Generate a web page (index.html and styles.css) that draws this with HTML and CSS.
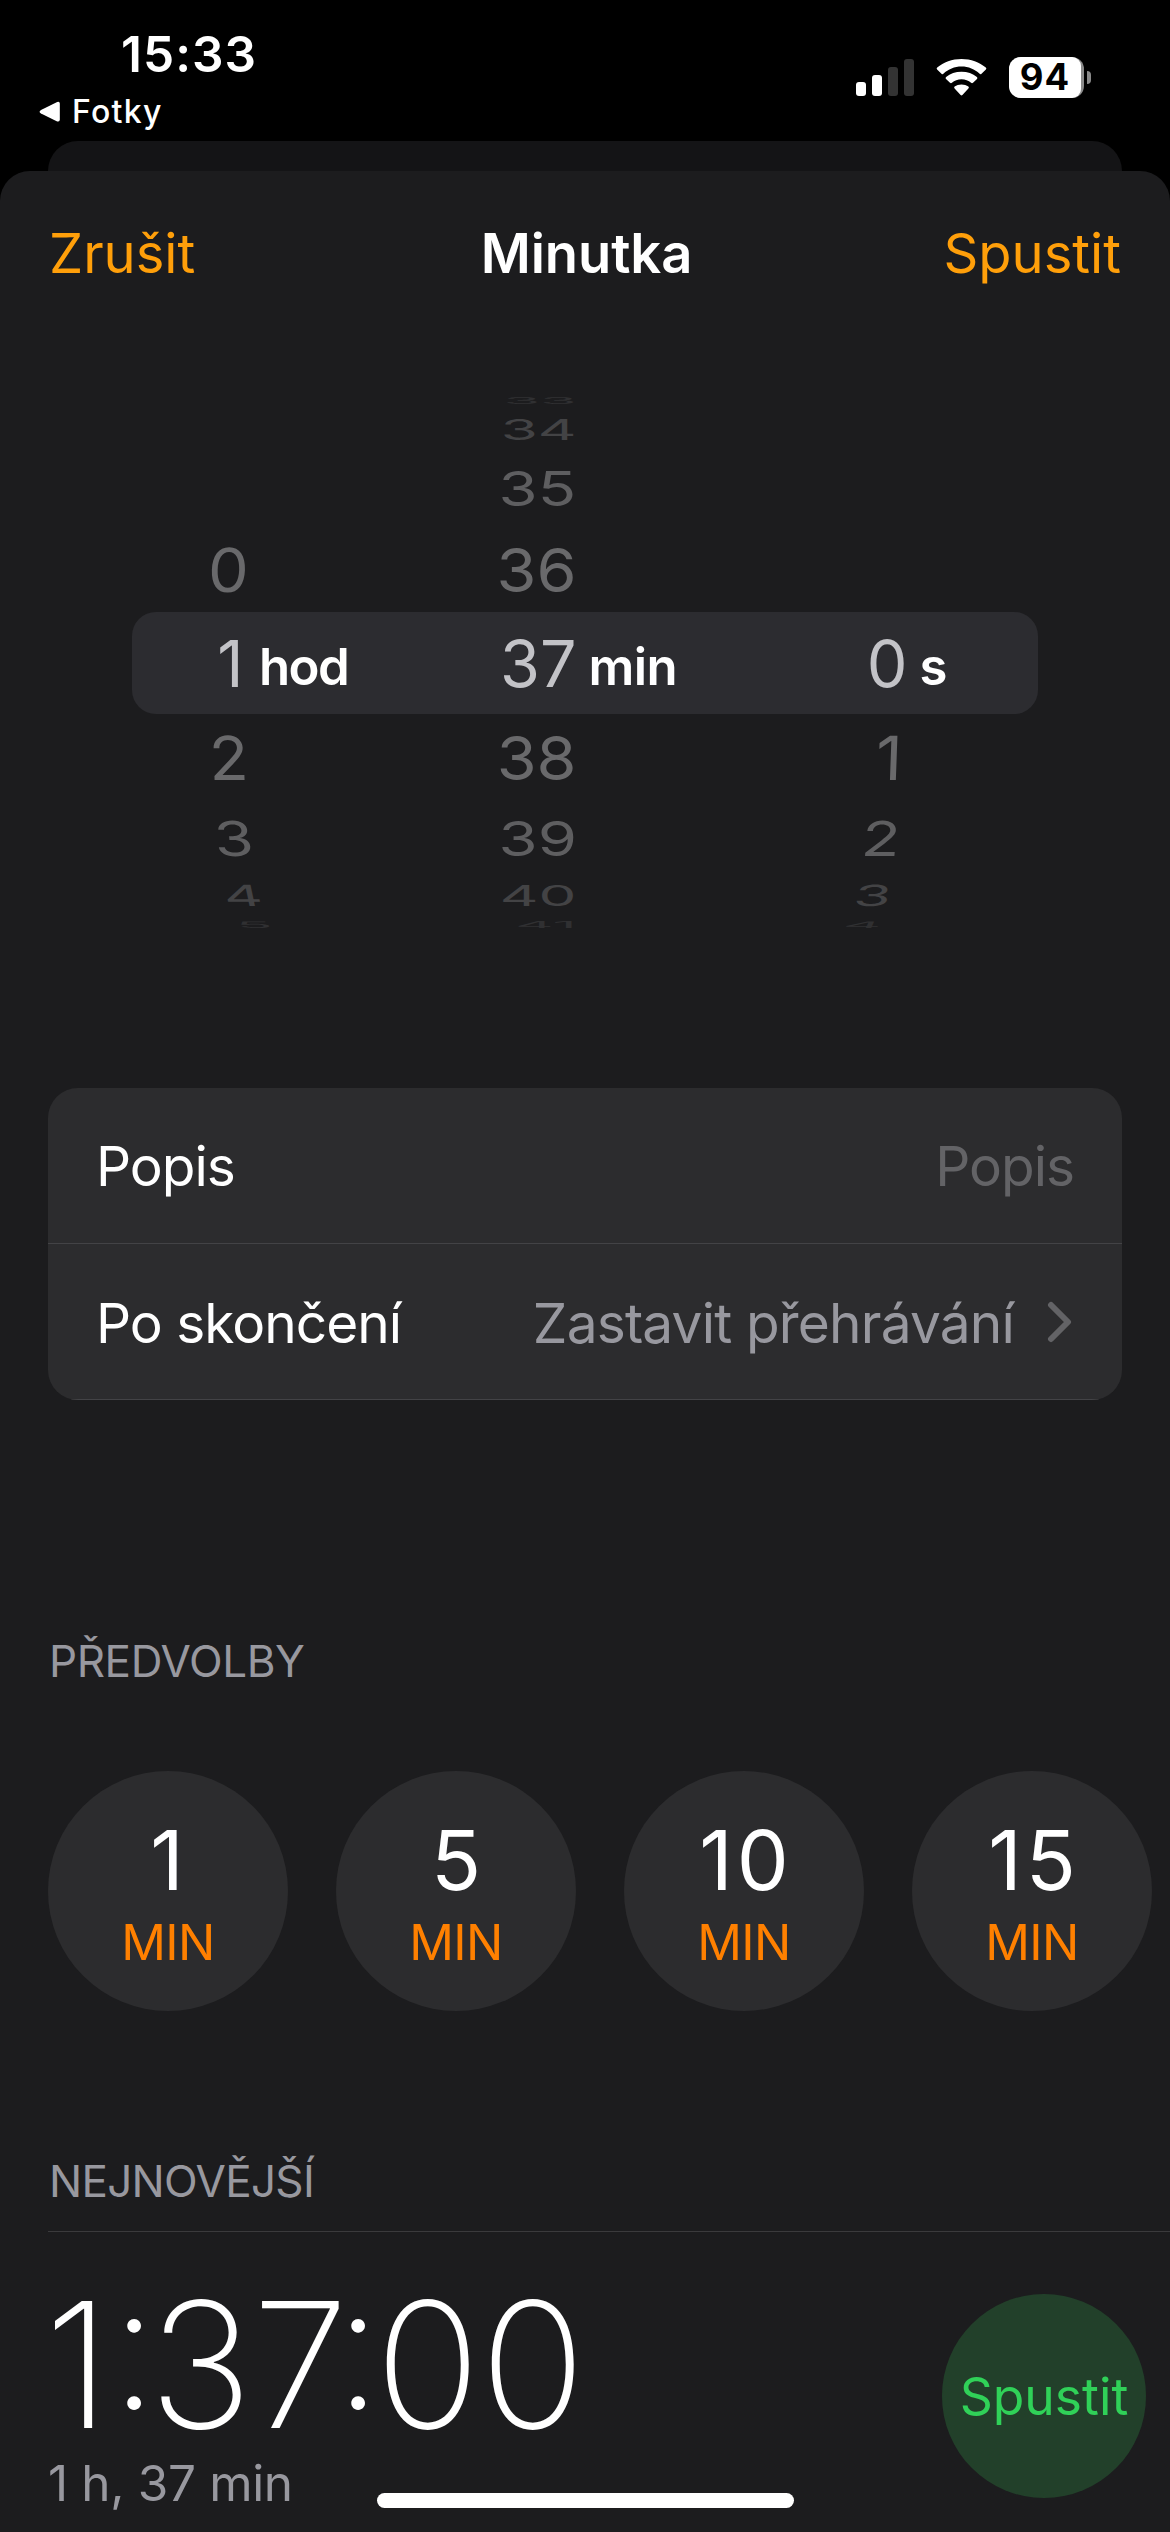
FILE: index.html
```html
<!DOCTYPE html>
<html lang="cs">
<head>
<meta charset="utf-8">
<title>Minutka</title>
<link rel="stylesheet" href="styles.css">
</head>
<body>
<div class="screen">
  <header class="status">
    <div class="status-left">
      <div class="clock">15:33</div>
      <div class="back">
        <svg class="back-arrow" width="22" height="22" viewBox="0 0 22 22"><path d="M2 8.9 L18.2 1 Q20.8 0 20.8 2.6 V18.6 Q20.8 21.2 18.2 20.4 L2 12.6 Q-.8 10.8 2 8.9Z" fill="#fff"/></svg>
        <span>Fotky</span>
      </div>
    </div>
    <div class="status-right">
      <svg class="signal" width="58" height="37" viewBox="0 0 58 37">
        <rect x="0" y="23" width="10" height="14" rx="3" fill="#fff"/>
        <rect x="16" y="16" width="10" height="21" rx="3" fill="#fff"/>
        <rect x="32" y="8" width="10" height="29" rx="3" fill="#333"/>
        <rect x="48" y="0" width="10" height="37" rx="3" fill="#333"/>
      </svg>
      <svg class="wifi" width="51" height="37" viewBox="0 0 51 37" fill="#fff">
        <path d="M25.5 7.6C32.5 7.6 38.8 10.3 43.6 14.8Q44.6 15.7 45.5 14.7L49.9 10.6Q50.9 9.6 49.8 8.6C43.4 3.2 34.9 0 25.5 0S7.6 3.2 1.2 8.6Q.1 9.6 1.1 10.6L5.5 14.7Q6.4 15.7 7.4 14.8C12.2 10.3 18.5 7.6 25.5 7.6Z"/>
        <path d="M25.5 20.2C29.3 20.2 32.5 21.6 35.1 23.8Q36.1 24.6 37 23.7L41 19.9Q42 18.9 40.9 18C36.8 14.6 31.4 12.7 25.5 12.7S14.2 14.6 10.1 18Q9 18.9 10 19.9L14 23.7Q14.9 24.6 15.9 23.8C18.5 21.6 21.7 20.2 25.5 20.2Z"/>
        <path d="M25.5 25.4C28.2 25.4 30.5 26.2 32.4 27.6Q33.4 28.5 32.4 29.5L26.4 36.1Q25.5 37 24.6 36.1L18.6 29.5Q17.6 28.5 18.6 27.6C20.5 26.2 22.8 25.4 25.5 25.4Z"/>
      </svg>
      <div class="battery"><div class="battery-level">94</div></div>
      <div class="battery-cap"></div>
    </div>
  </header>
  <div class="sheet-behind"></div>
  <main class="sheet">
    <nav class="navbar">
      <a class="nav-action">Zrušit</a>
      <h1 class="nav-title">Minutka</h1>
      <a class="nav-action nav-right">Spustit</a>
    </nav>

    <section class="picker">
      <div class="picker-band"></div>
      <div class="wheel wheel-hours">
        <span class="row r4"></span><span class="row r3"></span><span class="row r2"></span>
        <span class="row r1 up">0</span>
        <span class="row r0">1</span>
        <span class="row r1 down">2</span><span class="row r2 down">3</span><span class="row r3 down">4</span><span class="row r4 down">5</span>
      </div>
      <div class="unit unit-hours">hod</div>
      <div class="wheel wheel-minutes">
        <span class="row r4">33</span><span class="row r3">34</span><span class="row r2">35</span><span class="row r1">36</span>
        <span class="row r0">37</span>
        <span class="row r1">38</span><span class="row r2">39</span><span class="row r3">40</span><span class="row r4">41</span>
      </div>
      <div class="unit">min</div>
      <div class="wheel wheel-seconds">
        <span class="row r4"></span><span class="row r3"></span><span class="row r2"></span><span class="row r1"></span>
        <span class="row r0">0</span>
        <span class="row r1 down">1</span><span class="row r2 down">2</span><span class="row r3 down">3</span><span class="row r4 down">4</span>
      </div>
      <div class="unit">s</div>
    </section>

    <section class="card">
      <div class="field">
        <span class="field-label">Popis</span>
        <span class="field-placeholder">Popis</span>
      </div>
      <div class="field field-end">
        <span class="field-label">Po skončení</span>
        <span class="field-value">Zastavit přehrávání</span>
        <svg class="chevron" width="26" height="42" viewBox="0 0 26 42"><path d="M4 4 L21 21 L4 38" fill="none" stroke="#636366" stroke-width="6" stroke-linecap="round" stroke-linejoin="round"/></svg>
      </div>
    </section>

    <h2 class="section-title presets-title">PŘEDVOLBY</h2>
    <div class="presets">
      <div class="preset"><b class="one">1</b><span>MIN</span></div>
      <div class="preset"><b>5</b><span>MIN</span></div>
      <div class="preset"><b class="two">10</b><span>MIN</span></div>
      <div class="preset"><b class="two">15</b><span>MIN</span></div>
    </div>

    <h2 class="section-title recents-title">NEJNOVĚJŠÍ</h2>
    <div class="recent">
      <div class="recent-info">
        <div class="recent-time">1<i class="colon first">:</i>37<i class="colon">:</i>00</div>
        <div class="recent-name">1 h, 37 min</div>
      </div>
      <div class="start">Spustit</div>
    </div>
  </main>
  <div class="home-indicator"></div>
</div>
</body>
</html>
```
FILE: styles.css
```css
* { box-sizing: border-box; }
body {
  margin: 0;
  background: #000;
  color: #fff;
  font-family: Inter, "Liberation Sans", sans-serif;
}
.screen {
  position: relative;
  display: flex;
  flex-direction: column;
  width: 1170px;
  height: 2532px;
  overflow: hidden;
  background: #000;
}

/* Status bar */
.status {
  display: flex;
  justify-content: space-between;
  flex: none;
  height: 141px;
}
.status-left { padding-top: 24px; }
.clock {
  margin-left: 121px;
  font-size: 49.5px;
  font-weight: 600;
  line-height: 60px;
  letter-spacing: 1.05px;
}
.back {
  display: flex;
  align-items: center;
  gap: 11px;
  margin: 7px 0 0 39px;
  font-size: 32px;
  font-weight: 500;
  line-height: 41px;
  letter-spacing: 1.25px;
}
.status-right {
  display: flex;
  align-items: center;
  height: 41px;
  margin: 57px 79px 0 0;
}
.wifi { margin: 0 22px; }
.battery {
  width: 75px;
  height: 41px;
  border-radius: 12px;
  background: #8a8a8a;
}
.battery-level {
  width: 72px;
  height: 41px;
  border-radius: 12px 9px 9px 12px;
  background: #fff;
  color: #000;
  font-size: 36.5px;
  font-weight: 700;
  line-height: 41px;
  letter-spacing: 1px;
  text-align: center;
}
.battery-cap {
  width: 4px;
  height: 13px;
  margin-left: 3px;
  border-radius: 0 6px 6px 0;
  background: #8a8a8a;
}

/* Sheets */
.sheet-behind {
  flex: none;
  height: 30px;
  margin: 0 48px;
  border-radius: 30px 30px 0 0;
  background: #141416;
}
.sheet {
  flex: 1;
  border-radius: 30px 30px 0 0;
  background: #1c1c1e;
}
.navbar {
  display: grid;
  grid-template-columns: 1fr auto 1fr;
  align-items: center;
  height: 164px;
  padding: 0 49px;
  font-size: 54.3px;
}
.nav-action { color: #ff9f0a; }
.nav-right { text-align: right; }
.nav-title {
  margin: 0 0 0 3px;
  font-size: 54.3px;
  font-weight: 600;
  letter-spacing: -.1px;
}

/* Time picker */
.picker {
  position: relative;
  display: grid;
  grid-template-columns: 111.5px 144.5px 188.5px 144px 187px 130.5px;
  align-items: center;
  height: 542px;
  margin: 57px 132px 0;
}
.picker-band {
  position: absolute;
  inset: 220px 0;
  border-radius: 24px;
  background: #2c2c30;
}
.wheel {
  position: relative;
  display: flex;
  flex-direction: column;
  align-items: flex-end;
  font-size: 64.6px;
}
.row {
  --shift: 0px;
  --lean: 0deg;
  --narrow: 1;
  --squash: 1;
  flex: none;
  transform: translateX(var(--shift)) skewX(var(--lean)) scale(var(--narrow), var(--squash));
  transform-origin: right center;
}
.r0 { height: 102px; line-height: 103px; color: #c3c3c7; }
.r1 { height: 86px; line-height: 87px; --squash: .94; color: #69696b; }
.r2 { height: 76px; line-height: 77px; --narrow: .98; --squash: .745; color: #5e5e60; }
.r3 { height: 40px; line-height: 40px; --narrow: .93; --squash: .45; color: #434345; }
.r4 { height: 18px; line-height: 18px; --narrow: .92; --squash: .14; color: #303032; }
.wheel-hours .r1 { --shift: 5px; --lean: 2deg; }
.wheel-hours .r1.up { --lean: -2deg; }
.wheel-hours .r2 { --shift: 9.5px; --lean: 5deg; }
.wheel-hours .r3 { --shift: 18.5px; --lean: 12deg; }
.wheel-hours .r4 { --shift: 29px; --lean: 24deg; }
.wheel-seconds .r1 { --shift: -5px; --lean: -2deg; }
.wheel-seconds .r2 { --shift: -7px; --lean: -5deg; }
.wheel-seconds .r3 { --shift: -16.5px; --lean: -12deg; }
.wheel-seconds .r4 { --shift: -26px; --lean: -24deg; }
.unit {
  position: relative;
  padding: 7px 0 0 12px;
  font-size: 50.9px;
  font-weight: 600;
  letter-spacing: -.6px;
}
.unit-hours { padding-left: 15.5px; letter-spacing: -1.6px; }

/* Settings card */
.card {
  margin: 154px 48px 0;
  border-radius: 30px;
  background: #2c2c2e;
  overflow: hidden;
  font-size: 55px;
  letter-spacing: -1px;
}
.field {
  display: flex;
  align-items: center;
  height: 156px;
  padding: 0 48px;
  border-bottom: 1px solid #434346;
}
.field-end { padding: 3px 49px 0 48px; }
.field-placeholder { margin-left: auto; color: #636366; }
.field-value {
  margin-left: auto;
  color: #98989f;
  letter-spacing: -.82px;
}
.chevron { margin: -3px 0 0 33px; }

/* Presets */
.section-title {
  margin: 0 49px;
  color: #98989f;
  font-size: 44px;
  font-weight: 400;
  line-height: 52px;
}
.presets-title { margin-top: 235px; letter-spacing: -.4px; }
.presets {
  display: flex;
  gap: 48px;
  margin: 84px 0 0 48px;
}
.preset {
  display: flex;
  flex: none;
  flex-direction: column;
  align-items: center;
  gap: 16px;
  width: 240px;
  height: 240px;
  padding-top: 48px;
  border-radius: 50%;
  background: #2c2c2e;
}
.preset b {
  font-size: 82.5px;
  font-weight: 400;
  line-height: 82px;
}
.preset .one { margin-right: 2px; }
.preset .two { margin-right: -4px; letter-spacing: 4px; }
.preset span {
  color: #ff8000;
  font-size: 49.5px;
  line-height: 50px;
  letter-spacing: -.6px;
}

/* Recent timers */
.recents-title { margin-top: 144px; letter-spacing: -.7px; }
.recent {
  display: flex;
  justify-content: space-between;
  margin: 24px 0 0 48px;
  padding: 62px 24px 0 0;
  border-top: 1px solid #3a3a3c;
}
.recent-time {
  margin: 1px 0 0 -4px;
  font-size: 174.7px;
  font-weight: 200;
  line-height: 140px;
  letter-spacing: -.5px;
}
.colon {
  margin: 0 -7px 0 -14px;
  font-style: normal;
  font-feature-settings: "case";
}
.colon.first { margin: 0 -9px 0 0; }
.recent-name {
  margin-top: 18px;
  color: #98989f;
  font-size: 49.5px;
  line-height: 60px;
  letter-spacing: -.35px;
}
.start {
  width: 204px;
  height: 204px;
  border-radius: 50%;
  background: #22402a;
  color: #30d158;
  font-size: 51.6px;
  line-height: 204px;
  text-align: center;
}
.home-indicator {
  position: absolute;
  bottom: 24px;
  left: 377px;
  width: 417px;
  height: 15px;
  border-radius: 8px;
  background: #fff;
}
```
